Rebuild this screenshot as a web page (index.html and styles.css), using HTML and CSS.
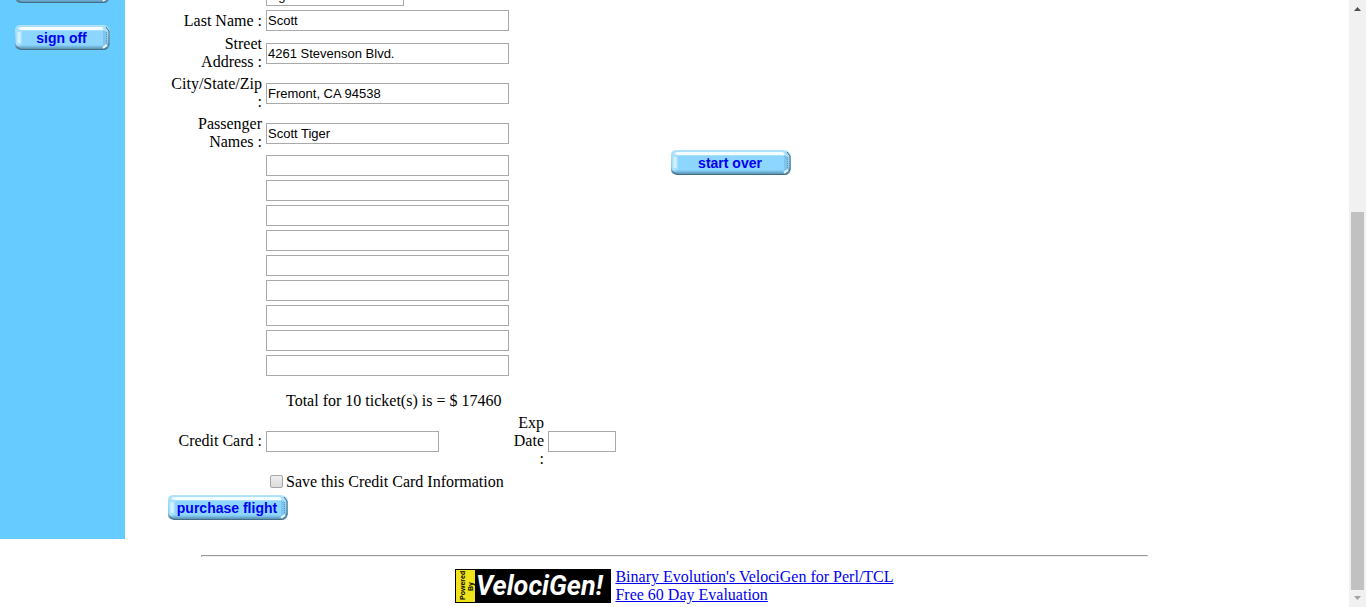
FILE: index.html
```html
<!DOCTYPE html>
<html lang="en">
<head>
<meta charset="utf-8">
<title>Book a Flight</title>
<link rel="stylesheet" href="styles.css">
</head>
<body>
<div class="page">
  <div class="columns">
    <nav class="sidebar">
      <button class="bevel bevel-small" type="button" aria-label="Menu"><svg class="bevel-art" viewBox="0 0 95 25" aria-hidden="true"><use href="#bevel-small"/></svg></button>
      <button class="bevel bevel-small" type="button"><svg class="bevel-art" viewBox="0 0 95 25" aria-hidden="true"><use href="#bevel-small"/></svg><span class="bevel-label">sign off</span></button>
    </nav>
    <main class="main">
      <form class="booking">
        <input class="field field-first" type="text" value="Tiger" aria-label="First Name">
        <label class="label" for="last">Last Name :</label>
        <input class="field" id="last" type="text" value="Scott">
        <label class="label" for="street">Street Address :</label>
        <input class="field" id="street" type="text" value="4261 Stevenson Blvd.">
        <label class="label" for="city">City/State/Zip :</label>
        <input class="field" id="city" type="text" value="Fremont, CA 94538">
        <label class="label" for="pass1">Passenger Names :</label>
        <input class="field" id="pass1" type="text" value="Scott Tiger">
        <input class="field" type="text" aria-label="Passenger 2">
        <input class="field" type="text" aria-label="Passenger 3">
        <input class="field" type="text" aria-label="Passenger 4">
        <input class="field" type="text" aria-label="Passenger 5">
        <input class="field" type="text" aria-label="Passenger 6">
        <input class="field" type="text" aria-label="Passenger 7">
        <input class="field" type="text" aria-label="Passenger 8">
        <input class="field" type="text" aria-label="Passenger 9">
        <input class="field" type="text" aria-label="Passenger 10">
        <p class="total">Total for 10 ticket(s) is = $ 17460</p>
        <label class="label" for="card">Credit Card :</label>
        <input class="field field-card" id="card" type="text">
        <label class="label label-exp" for="exp">Exp Date :</label>
        <input class="field field-exp" id="exp" type="text">
        <div class="save"><input class="check" id="save" type="checkbox"><label for="save">Save this Credit Card Information</label></div>
        <button class="bevel purchase" type="submit"><svg class="bevel-art" viewBox="0 0 120 25" aria-hidden="true"><use href="#bevel-wide"/></svg><span class="bevel-label">purchase flight</span></button>
      </form>
      <button class="bevel start-over" type="button"><svg class="bevel-art" viewBox="0 0 120 25" aria-hidden="true"><use href="#bevel-wide"/></svg><span class="bevel-label">start over</span></button>
    </main>
  </div>
  <hr class="rule">
  <footer class="footer">
    <svg class="logo" viewBox="0 0 156 34" role="img" aria-label="Powered by VelociGen!">
      <rect width="156" height="34"/>
      <rect x="1" y="1" width="19" height="32" fill="#efe31b"/>
      <g class="logo-small" transform="rotate(-90)"><text x="-31" y="10">Powered</text><text x="-22" y="18">By</text></g>
      <text class="logo-name" x="21" y="26">VelociGen!</text>
    </svg>
    <div class="links">
      <a href="#">Binary Evolution's VelociGen for Perl/TCL</a>
      <a href="#">Free 60 Day Evaluation</a>
    </div>
  </footer>
</div>
<div class="scrollbar" aria-hidden="true">
  <svg class="arrow" viewBox="0 0 17 17"><path d="M5 11L8.500 7L12 11Z" fill="#505050"/></svg>
  <div class="thumb"></div>
  <svg class="arrow" viewBox="0 0 17 17"><path d="M5 6L8.500 10L12 6Z" fill="#a3a3a3"/></svg>
</div>
<svg class="defs" aria-hidden="true">
  <linearGradient id="edge" x2="0" y2="1"><stop offset="0" stop-color="#b5e3fa"/><stop offset=".7" stop-color="#8acbf0"/><stop offset="1" stop-color="#41677c"/></linearGradient>
  <linearGradient id="lip" x2="0" y2="1"><stop offset="0" stop-color="#8dd6ff"/><stop offset="1" stop-color="#5791b1"/></linearGradient>
  <symbol id="bevel-wide" viewBox="0 0 120 25">
    <path d="M0 5Q0 0 6 0H113Q120 1 120 7V19Q119 25 113 25H6Q0 24 0 20Z" fill="url(#edge)"/>
    <path d="M1 6Q2 1 7 1H112L117 5V20L113 23H6L1 20Z" fill="#a9e0fd"/>
    <path d="M3 4Q4 2 7 2H112L114 5H7Z" fill="#f4fdff"/>
    <path d="M4 7V18" stroke="#d3f2ff" stroke-width="3"/>
    <path d="M7 6H113V20H7Z" fill="#8dd6ff"/>
    <path d="M4 20H113V24H6Z" fill="url(#lip)"/>
    <path d="M113 5L117 7V19L113 21Z" fill="#7fc5ea"/>
    <path d="M116.500 7V19" stroke="#5c9abb" stroke-dasharray="1 1"/>
    <path d="M116 2L119 6V19L118 21" fill="none" stroke="#476b7e"/>
    <path d="M113 23L117 20" stroke="#e3f7ff" stroke-width="2"/>
  </symbol>
  <symbol id="bevel-small" viewBox="0 0 95 25">
    <path d="M0 5Q0 0 6 0H88Q95 1 95 7V19Q94 25 88 25H6Q0 24 0 20Z" fill="url(#edge)"/>
    <path d="M1 6Q2 1 7 1H87L92 5V20L88 23H6L1 20Z" fill="#a9e0fd"/>
    <path d="M3 4Q4 2 7 2H87L89 5H7Z" fill="#f4fdff"/>
    <path d="M4 7V18" stroke="#d3f2ff" stroke-width="3"/>
    <path d="M7 6H88V20H7Z" fill="#8dd6ff"/>
    <path d="M4 20H88V24H6Z" fill="url(#lip)"/>
    <path d="M88 5L92 7V19L88 21Z" fill="#7fc5ea"/>
    <path d="M91.500 7V19" stroke="#5c9abb" stroke-dasharray="1 1"/>
    <path d="M91 2L94 6V19L93 21" fill="none" stroke="#476b7e"/>
    <path d="M88 23L92 20" stroke="#e3f7ff" stroke-width="2"/>
  </symbol>
</svg>
</body>
</html>
```
FILE: styles.css
```css
* { box-sizing: border-box; }
body {
  margin: 0;
  height: 100vh;
  display: flex;
  overflow: hidden;
  background: #fff;
  color: #000;
  font: 16px/18px "Liberation Serif", serif;
}
.page { flex: 1; min-width: 0; overflow: hidden; }
.columns { display: flex; }
.sidebar {
  width: 125px;
  display: flex;
  flex-direction: column;
  gap: 22px;
  margin-top: -22px;
  padding-left: 15px;
  background: #6cf;
}
.main { display: flex; align-items: flex-start; gap: 55px; padding: 0 0 19px 43px; }
.booking {
  display: grid;
  grid-template-columns: 94px 243px 31px 68px;
  gap: 4px;
  align-items: center;
  margin-top: -15px;
}
.label { grid-column: 1; padding-left: 2px; text-align: right; }
.field {
  grid-column: 2;
  width: 100%;
  height: 21px;
  padding: 1px;
  border: 1px solid #a9a9a9;
  border-radius: 0;
  background: #fff;
  color: #000;
  font: 13px "Liberation Sans", sans-serif;
}
.field-first { width: 138px; }
.field-card { width: 173px; }
.label-exp { grid-column: 3; padding-left: 0; }
.field-exp { grid-column: 4; }
.total { grid-column: 2; margin: 12px 0 0 20px; }
.save { grid-column: 2 / 5; display: flex; align-items: center; gap: 2px; padding: 1px 0 0 3px; }
.check {
  appearance: none;
  width: 13px;
  height: 13px;
  margin: 0 1px 2px;
  border: 1px solid #a6a6a6;
  border-radius: 2px;
  background: linear-gradient(#eee, #dcdcdc);
}
.bevel {
  display: grid;
  place-items: center;
  width: 120px;
  height: 25px;
  padding: 0;
  border: 0;
  background: none;
  color: #00f;
  font: bold 14px/23px "Liberation Sans", sans-serif;
}
.bevel-small { width: 95px; }
.bevel-art { grid-area: 1 / 1; display: block; width: 100%; height: 25px; }
.bevel-label { grid-area: 1 / 1; padding: 2px 2px 0 0; color: #00e; }
.purchase { grid-column: 1 / 3; }
.start-over { margin-top: 150px; }
.rule { width: calc(100% - 402px); margin: 16px auto 11px; border: 1px inset #eee; }
.footer { display: flex; justify-content: center; align-items: center; gap: 4px; }
.logo { width: 156px; height: 34px; }
.logo-small { font: bold 7px "Liberation Sans", sans-serif; }
.logo-name { font: italic 700 27px Roboto, sans-serif; fill: #fff; }
.links { display: flex; flex-direction: column; align-items: flex-start; }
.links a { color: #00e; }
.scrollbar { width: 17px; display: flex; flex-direction: column; background: #f1f1f1; }
.arrow { width: 17px; height: 17px; flex: none; }
.thumb { flex: 0 0 378px; margin: auto 2px 0; background: #c1c1c1; }
.defs { position: absolute; width: 0; height: 0; }
```
